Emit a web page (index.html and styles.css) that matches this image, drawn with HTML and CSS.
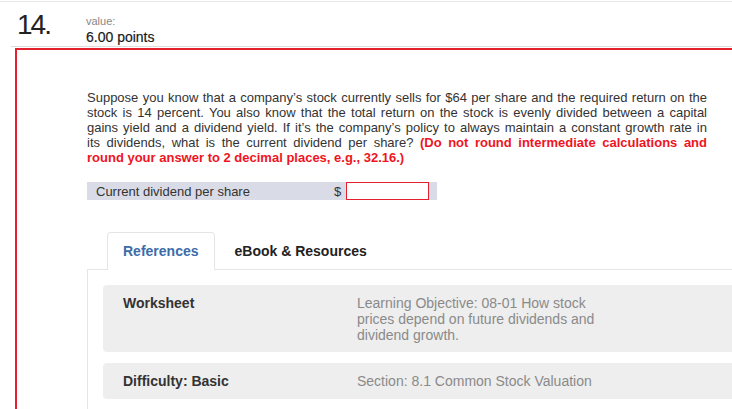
FILE: index.html
```html
<!DOCTYPE html>
<html>
<head>
<meta charset="utf-8">
<link rel="stylesheet" href="styles.css">
</head>
<body>
<div class="page">
  <div class="top-rule"></div>
  <header class="q-head">
    <div class="q-num">14.</div>
    <div class="q-value">
      <div class="value-label">value:</div>
      <div class="value-points">6.00 points</div>
    </div>
  </header>
  <section class="q-box">
    <p class="q-text"><span class="ln">Suppose you know that a company’s stock currently sells for $64 per share and the required return on the</span>
<span class="ln">stock is 14 percent. You also know that the total return on the stock is evenly divided between a capital</span>
<span class="ln">gains yield and a dividend yield. If it’s the company’s policy to always maintain a constant growth rate in</span>
<span class="ln">its dividends, what is the current dividend per share? <strong class="hint">(Do not round intermediate calculations and</strong></span>
<span class="ln last"><strong class="hint">round your answer to 2 decimal places, e.g., 32.16.)</strong></span></p>
    <div class="answer-row">
      <span class="answer-label">Current dividend per share</span>
      <span class="answer-cur">$</span>
      <span class="answer-input"></span>
    </div>
    <div class="tabs-area">
      <div class="tabs">
        <div class="tab active">References</div>
        <div class="tab">eBook &amp; Resources</div>
      </div>
      <div class="panel">
        <div class="ref-row">
          <div class="ref-key">Worksheet</div>
          <div class="ref-val">Learning Objective: 08-01 How stock prices depend on future dividends and dividend growth.</div>
        </div>
        <div class="ref-row">
          <div class="ref-key">Difficulty: Basic</div>
          <div class="ref-val">Section: 8.1 Common Stock Valuation</div>
        </div>
      </div>
    </div>
  </section>
</div>
</body>
</html>
```

FILE: styles.css
```css
html, body {
  margin: 0;
  padding: 0;
  background: #fff;
  overflow: hidden;
}
body {
  font-family: "Liberation Sans", Arial, sans-serif;
  color: #333;
  width: 732px;
  height: 409px;
}
.page {
  padding-top: 1px;
}
.top-rule {
  border-top: 1px solid #e8e8e8;
}
.q-head {
  display: flex;
  align-items: flex-start;
  margin-left: 11px;
  height: 45px;
  border-bottom: 1px solid #dddddd;
  box-sizing: border-box;
}
.q-num {
  font-size: 28px;
  line-height: 28px;
  letter-spacing: -2px;
  color: #222;
  margin-top: 9px;
  margin-left: 6px;
  width: 69px;
}
.q-value {
  margin-top: 13px;
}
.value-label {
  font-size: 11px;
  line-height: 12px;
  color: #888;
}
.value-points {
  font-size: 14px;
  line-height: 16px;
  color: #1a1a1a;
  margin-top: 2px;
  -webkit-text-stroke: 0.2px #1a1a1a;
}
.q-box {
  margin-left: 15px;
  margin-top: 1px;
  margin-right: -200px;
  border-top: 2px solid #e3212d;
  border-left: 2px solid #e3212d;
  padding: 40px 0 40px 70px;
}
.q-text {
  margin: 0;
  width: 620px;
  font-size: 13px;
  line-height: 15px;
  color: #333;
}
.ln {
  display: block;
  text-align: justify;
  text-align-last: justify;
  white-space: nowrap;
}
.ln.last {
  text-align-last: left;
}
.hint {
  color: #f0141e;
  font-weight: bold;
}
.answer-row {
  margin-top: 17px;
  width: 350px;
  height: 18px;
  background: #d9dce6;
  display: flex;
  align-items: center;
  box-sizing: border-box;
  padding-left: 9px;
  font-size: 13px;
  color: #333;
}
.answer-label {
  width: 238px;
}
.answer-cur {
  width: 12px;
}
.answer-input {
  width: 83px;
  height: 18px;
  box-sizing: border-box;
  background: #fff;
  border: 1px solid #e3212d;
}
.tabs-area {
  margin-top: 32px;
}
.tabs {
  display: flex;
  padding-left: 20px;
  position: relative;
  z-index: 1;
}
.tab {
  font-size: 14px;
  font-weight: bold;
  color: #222;
  height: 38px;
  line-height: 37px;
  padding: 0 15px;
  box-sizing: border-box;
  border: 1px solid transparent;
  border-bottom: none;
  margin-right: 4px;
}
.tab.active {
  color: #3b6ca8;
  background: #fff;
  border-color: #e5e5e5;
  border-radius: 4px 4px 0 0;
}
.panel {
  margin-top: -1px;
  border-top: 1px solid #e5e5e5;
  border-left: 1px solid #e5e5e5;
  padding: 15px 0 20px 15px;
  display: flex;
  flex-direction: column;
  gap: 11px;
}
.ref-row {
  display: flex;
  background: #eeeeee;
  border-radius: 4px 0 0 4px;
  padding: 10px 0 9px 20px;
  font-size: 14px;
  line-height: 16px;
}
.ref-row + .ref-row {
  padding-bottom: 10px;
}
.ref-key {
  width: 234px;
  font-weight: bold;
  color: #333;
  flex: none;
}
.ref-val {
  width: 250px;
  color: #8a8a8a;
}
```
